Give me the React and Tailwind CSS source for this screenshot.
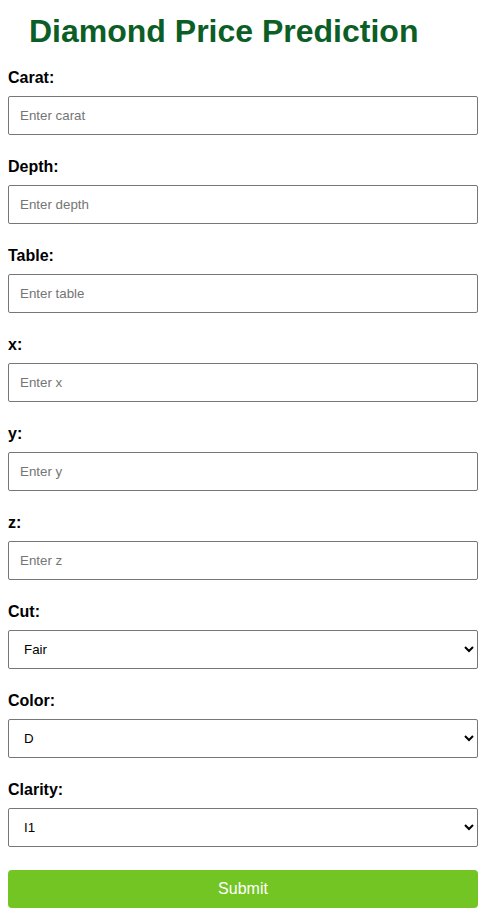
import React from 'react';

const fields = [
  { label: 'Carat:', placeholder: 'Enter carat' },
  { label: 'Depth:', placeholder: 'Enter depth' },
  { label: 'Table:', placeholder: 'Enter table' },
  { label: 'x:', placeholder: 'Enter x' },
  { label: 'y:', placeholder: 'Enter y' },
  { label: 'z:', placeholder: 'Enter z' },
];

const selects = [
  { label: 'Cut:', options: ['Fair', 'Good', 'Very Good', 'Premium', 'Ideal'] },
  { label: 'Color:', options: ['D', 'E', 'F', 'G', 'H', 'I', 'J'] },
  { label: 'Clarity:', options: ['I1', 'SI2', 'SI1', 'VS2', 'VS1', 'VVS2', 'VVS1', 'IF'] },
];

const App = () => {
  return (
    <div className="bg-white min-h-[919px] px-2 font-['Liberation_Sans',Arial,sans-serif]">
      <h1 className="pt-[13px] pl-[21px] text-[32px] leading-[37px] font-bold text-[#0b5e25]">
        Diamond Price Prediction
      </h1>

      <form className="mt-[19px] w-[470px]" onSubmit={(e) => e.preventDefault()}>
        {fields.map((f) => (
          <div key={f.label} className="mb-[23px]">
            <label className="block h-[18px] leading-[18px] mb-[9px] text-base font-bold text-black">
              {f.label}
            </label>
            <input
              type="text"
              placeholder={f.placeholder}
              className="block w-full h-[39px] px-[11px] border border-[#767676] rounded-[2px] text-[13.33px] text-black placeholder:text-[#757575] bg-white"
            />
          </div>
        ))}

        {selects.map((s) => (
          <div key={s.label} className="mb-[23px]">
            <label className="block h-[18px] leading-[18px] mb-[9px] text-base font-bold text-black">
              {s.label}
            </label>
            <select className="block w-full h-[39px] px-[11px] border border-[#767676] rounded-[2px] text-[13.33px] text-black bg-white">
              {s.options.map((o) => (
                <option key={o}>{o}</option>
              ))}
            </select>
          </div>
        ))}

        <button
          type="submit"
          className="block w-full h-[38px] mt-px rounded-[4px] bg-[#73c524] text-white text-base"
        >
          Submit
        </button>
      </form>
    </div>
  );
};

export default App;
